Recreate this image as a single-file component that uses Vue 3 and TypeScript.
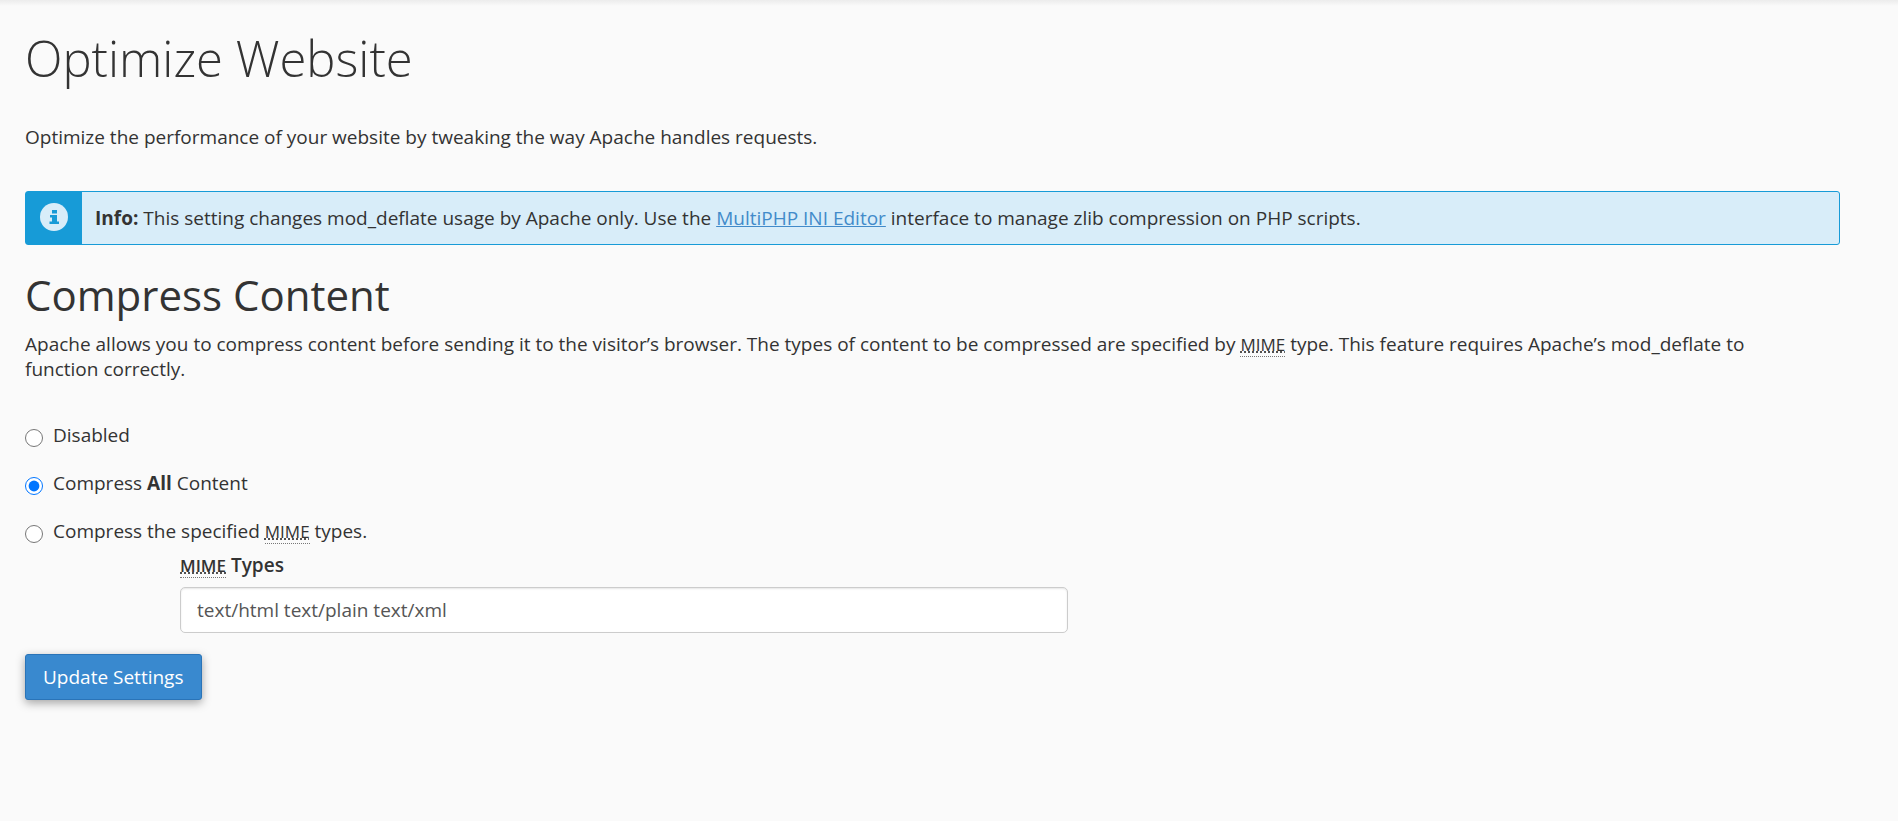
<script setup lang="ts">
import { ref } from 'vue'

type CompressionMode = 'disabled' | 'all' | 'list'

const mode = ref<CompressionMode>('all')
const mimeTypes = ref('text/html text/plain text/xml')
</script>

<template>
  <main class="page">
    <h1 class="page-title">Optimize Website</h1>
    <p class="lead">
      Optimize the performance of your website by tweaking the way Apache handles requests.
    </p>

    <div class="alert" role="note">
      <div class="alert-icon">
        <svg viewBox="0 0 28 28" width="28" height="28" aria-hidden="true">
          <circle cx="14" cy="14" r="14" fill="#d8edf9" />
          <path d="M12 7h5v3.500h-5zM10 12h7v6.500h2v2.500h-9.500v-2.500h2.500v-4h-2z" fill="#179bd7" />
        </svg>
      </div>
      <div class="alert-message">
        <strong>Info:</strong> This setting changes mod_deflate usage by Apache only. Use the
        <a href="#">MultiPHP INI Editor</a> interface to manage zlib compression on PHP scripts.
      </div>
    </div>

    <h2 class="section-title">Compress Content</h2>
    <p class="description">
      Apache allows you to compress content before sending it to the visitor’s browser. The types of
      content to be compressed are specified by
      <abbr title="Multipurpose Internet Mail Extensions">MIME</abbr> type. This feature requires
      Apache’s mod_deflate to function correctly.
    </p>

    <form @submit.prevent>
      <div class="options">
        <label class="option">
          <input v-model="mode" type="radio" name="mode" value="disabled" />
          <span>Disabled</span>
        </label>
        <label class="option">
          <input v-model="mode" type="radio" name="mode" value="all" />
          <span>Compress <strong>All</strong> Content</span>
        </label>
        <label class="option">
          <input v-model="mode" type="radio" name="mode" value="list" />
          <span>Compress the specified <abbr title="Multipurpose Internet Mail Extensions">MIME</abbr> types.</span>
        </label>
      </div>
      <div class="field">
        <label for="mime-types"><abbr title="Multipurpose Internet Mail Extensions">MIME</abbr> Types</label>
        <input id="mime-types" v-model="mimeTypes" type="text" />
      </div>
      <button class="submit" type="submit">Update Settings</button>
    </form>
  </main>
</template>

<style>
body {
  background: #fafafa;
}
</style>

<style scoped>
.page {
  box-sizing: border-box;
  min-height: 100vh;
  padding: 28px 58px 24px 25px;
  background: linear-gradient(#ececec, #fafafa 6px);
  color: #333;
  font: 19px/25px "Open Sans", "Noto Sans", sans-serif;
}

.page-title {
  margin: 0;
  font-size: 49px;
  font-weight: 300;
  line-height: 60px;
}

.lead {
  margin: 37px 0 41px;
}

.alert {
  display: flex;
  border: 1px solid #179bd7;
  border-radius: 3px;
  background: #d8edf9;
}

.alert-icon {
  display: flex;
  flex: 0 0 56px;
  justify-content: center;
  padding-top: 11px;
  background: #179bd7;
}

.alert-message {
  padding: 14px 13px 13px;
}

a {
  color: #428bca;
  text-decoration: underline;
}

.section-title {
  margin: 26px 0 13px;
  font-size: 42px;
  font-weight: 400;
  line-height: 48px;
}

.description {
  margin: 0;
  padding-right: 24px;
}

abbr {
  border-bottom: 1px dotted #777;
  font-size: 17px;
  text-decoration: underline dotted;
}

.options {
  display: flex;
  flex-direction: column;
  gap: 23px;
  margin-top: 41px;
}

.option {
  display: flex;
  align-items: center;
}

.option input {
  width: 18px;
  height: 18px;
  margin: 4px 10px 0 0;
}

.field {
  width: calc(50% - 20px);
  margin: 9px 0 21px 155px;
}

.field label {
  display: block;
  font-weight: 600;
}

.field input {
  display: block;
  box-sizing: border-box;
  width: 100%;
  height: 46px;
  margin-top: 9px;
  padding: 8px 16px;
  border: 1px solid #ccc;
  border-radius: 5px;
  background: #fff;
  box-shadow: inset 0 1px 2px rgba(0, 0, 0, 0.1);
  color: #555;
  font: inherit;
}

.submit {
  display: block;
  padding: 9px 17px;
  border: 1px solid #2a74b8;
  border-radius: 3px;
  background: #3989cf;
  box-shadow: 0 3px 10px rgba(0, 0, 0, 0.35);
  color: #fff;
  font: inherit;
  line-height: 26px;
}
</style>
